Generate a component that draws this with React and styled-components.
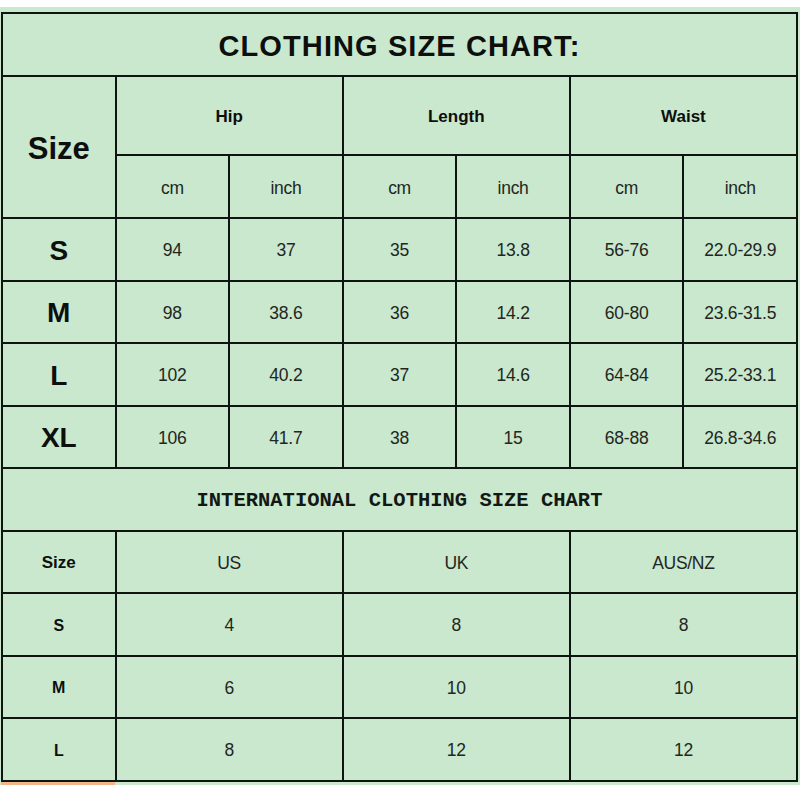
import React from "react"
import styled, { createGlobalStyle } from "styled-components"

const GlobalStyle = createGlobalStyle`
    html, body {
        margin: 0;
        padding: 0;
        background: #ffffff;
    }
`

const Sheet = styled.div`
    width: 800px;
    margin-top: 7px;
    padding: 5px 2px 0 1px;
    box-sizing: border-box;
    background: #c9e8cd;
`

const Chart = styled.div`
    display: grid;
    grid-template-columns: repeat(7, 1fr);
    grid-template-rows: 61px 77px 61px repeat(9, 60.5px);
    gap: 2px;
    padding: 2px;
    background: #101410;
    font-family: "Liberation Sans", Arial, sans-serif;
    color: #1b1d1b;
`

const Cell = styled.div`
    display: flex;
    align-items: center;
    justify-content: center;
    padding-top: 3px;
    background: #c9e8cd;
    grid-column: span ${p => p.$span || 1};
    grid-row: span ${p => p.$rows || 1};
    font-size: ${p => p.$size || 17.5}px;
    font-weight: ${p => (p.$bold ? 700 : 400)};
    letter-spacing: ${p => p.$spacing || 0}px;
    color: ${p => (p.$bold ? "#0d0f0d" : "#222622")};
`

const Title = styled(Cell)`
    font-size: 29px;
    letter-spacing: 1.1px;
    padding-top: 4px;
`

const SubTitle = styled(Cell)`
    font-family: "Liberation Mono", "Courier New", monospace;
    font-weight: 700;
    font-size: 20.5px;
    color: #141814;
`

const Footer = styled.div`
    display: flex;
    height: 3px;
`

const FooterMark = styled.div`
    width: 114px;
    background: #f2b68a;
`

const sizes = [
    ["S", "94", "37", "35", "13.8", "56-76", "22.0-29.9"],
    ["M", "98", "38.6", "36", "14.2", "60-80", "23.6-31.5"],
    ["L", "102", "40.2", "37", "14.6", "64-84", "25.2-33.1"],
    ["XL", "106", "41.7", "38", "15", "68-88", "26.8-34.6"],
]

const intl = [
    ["S", "4", "8", "8"],
    ["M", "6", "10", "10"],
    ["L", "8", "12", "12"],
]

const App = () => (
    <>
        <GlobalStyle />
        <Sheet>
            <Chart>
                <Title $span={7} $bold>CLOTHING SIZE CHART:</Title>

                <Cell $rows={2} $bold $size={31}>Size</Cell>
                <Cell $span={2} $bold $size={17}>Hip</Cell>
                <Cell $span={2} $bold $size={17}>Length</Cell>
                <Cell $span={2} $bold $size={17}>Waist</Cell>
                {["cm", "inch", "cm", "inch", "cm", "inch"].map((u, i) => (
                    <Cell key={i} $spacing={-0.3}>{u}</Cell>
                ))}

                {sizes.map(row => (
                    <React.Fragment key={row[0]}>
                        <Cell $bold $size={28}>{row[0]}</Cell>
                        {row.slice(1).map((v, i) => (
                            <Cell key={i} $spacing={-0.2}>{v}</Cell>
                        ))}
                    </React.Fragment>
                ))}

                <SubTitle $span={7}>INTERNATIONAL CLOTHING SIZE CHART</SubTitle>

                <Cell $bold $size={17}>Size</Cell>
                <Cell $span={2} $spacing={-0.3}>US</Cell>
                <Cell $span={2} $spacing={-0.3}>UK</Cell>
                <Cell $span={2} $spacing={-0.3}>AUS/NZ</Cell>

                {intl.map(row => (
                    <React.Fragment key={row[0]}>
                        <Cell $bold $size={16}>{row[0]}</Cell>
                        {row.slice(1).map((v, i) => (
                            <Cell key={i} $span={2} $spacing={-0.3}>{v}</Cell>
                        ))}
                    </React.Fragment>
                ))}
            </Chart>
            <Footer>
                <FooterMark />
            </Footer>
        </Sheet>
    </>
)

export default App
